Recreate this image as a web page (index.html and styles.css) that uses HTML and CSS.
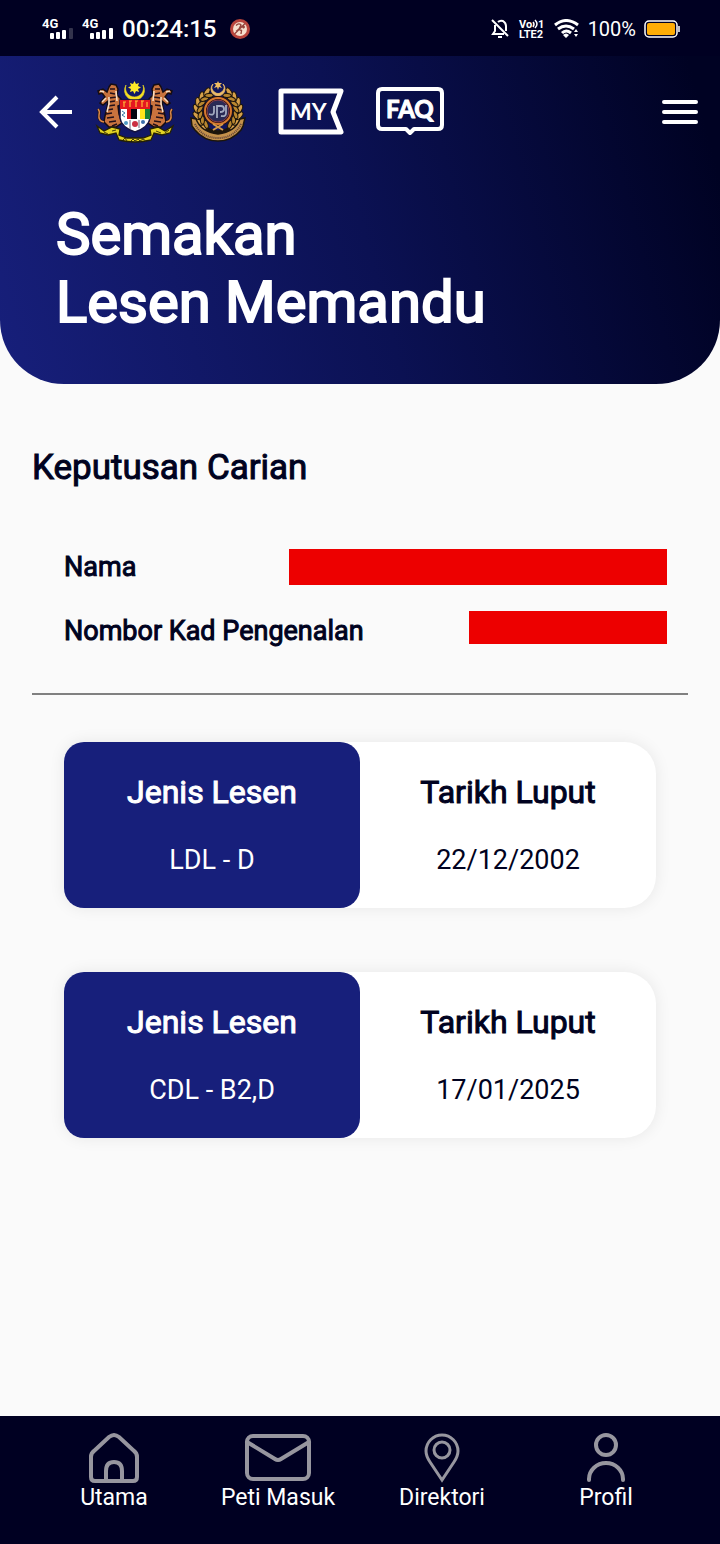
FILE: index.html
```html
<!DOCTYPE html>
<html lang="ms">
<head>
<meta charset="utf-8">
<meta name="viewport" content="width=device-width, initial-scale=1">
<title>Semakan Lesen Memandu</title>
<link rel="stylesheet" href="styles.css">
</head>
<body>
<div class="statusbar">
  <div class="status-left">
    <svg width="32" height="24" viewBox="0 0 32 24" role="img" aria-label="4G">
      <text x="0" y="11" class="net">4G</text>
      <g fill="#fff"><rect x="8" y="16" width="4" height="6" rx="1"/><rect x="14" y="15" width="4" height="7" rx="1"/><rect x="20" y="13" width="4" height="9" rx="1"/></g>
      <rect x="27" y="11" width="4" height="11" rx="1" fill="#33334c"/>
    </svg>
    <svg width="32" height="24" viewBox="0 0 32 24" role="img" aria-label="4G">
      <text x="0" y="11" class="net">4G</text>
      <g fill="#fff"><rect x="8" y="16" width="4" height="6" rx="1"/><rect x="14" y="15" width="4" height="7" rx="1"/><rect x="20" y="13" width="4" height="9" rx="1"/><rect x="27" y="11" width="4" height="11" rx="1"/></g>
    </svg>
    <time class="clock">00:24:15</time>
    <svg class="app-badge" width="22" height="22" viewBox="0 0 22 22" aria-hidden="true">
      <circle cx="11" cy="11" r="10" fill="#b9443c"/><circle cx="11" cy="11" r="7" fill="#f6dfcd"/>
      <path d="M7 7.500Q10 4.500 12 7L10 11L7 13.500M9.500 11L12.500 12.500L12 16M14.500 7V10.500M13 9H16M5.500 16L16 5.500" fill="none" stroke="#96453c" stroke-width="1.400"/>
    </svg>
  </div>
  <div class="status-right">
    <svg width="20" height="22" viewBox="0 0 20 22" fill="none" stroke="#fff" stroke-width="2" aria-hidden="true">
      <path d="M5 7V13L3 16H14M8 4Q10 2 13 3Q16 5 16 8V13M2 2L18 18"/><path d="M8 19H12"/>
    </svg>
    <svg width="28" height="26" viewBox="0 0 28 26" role="img" aria-label="VoLTE">
      <text x="1" y="12" class="volte">Vo</text><text x="20" y="12" class="volte">1</text><text x="1" y="22" class="volte">LTE2</text>
      <path d="M15 6Q17 8 15 11M17 4Q21 8 17 12" fill="none" stroke="#fff" stroke-width="1.500"/>
    </svg>
    <svg width="26" height="20" viewBox="0 0 26 20" aria-hidden="true">
      <g fill="none" stroke="#fff" stroke-width="3"><path d="M1 6Q12 -3 24 6"/><path d="M4 10Q12 4 20 10"/><path d="M8 14Q12 10 17 14"/></g>
      <path d="M9 16Q12 13 15 16L12 19ZM20 13L22 10L24 13ZM20 15H24L22 18Z" fill="#fff"/>
    </svg>
    <span class="battery-text">100%</span>
    <svg width="36" height="18" viewBox="0 0 36 18" aria-hidden="true">
      <rect x="1" y="1" width="32" height="16" rx="4" fill="none" stroke="#fff" stroke-width="1.500"/><rect x="3" y="3" width="28" height="12" rx="2" fill="#ffad05"/><path d="M35 6V12" stroke="#fff" stroke-width="1.500"/>
    </svg>
  </div>
</div>
<header class="hero">
  <nav class="toolbar" aria-label="Alat">
    <button class="icon-btn back" aria-label="Kembali">
      <svg width="34" height="34" viewBox="0 0 34 34" fill="none" stroke="#fff" stroke-width="4"><path d="M33 17H4M18 2L3 17L18 32"/></svg>
    </button>
    <svg class="jata" width="80" height="62" viewBox="0 0 80 62" role="img" aria-label="Jata Negara">
      <path d="M31 4A10 10 0 1 0 48 4A9 9 0 1 1 31 4Z" fill="#f5df20" stroke="#f5df20" stroke-width="0.600"/>
      <path d="M39.500 0L41 3L44 2L43 5L46 6.500L43 8L44 11L41 10L39.500 13L38 10L35 11L36 8L33 6.500L36 5L35 2L38 3Z" fill="#ffe928"/>
      <g id="tiger">
        <path d="M14 6L16 3L21 4L23 8L22 14L26 18L28 23L23 25L24 33L27 42L21 46H14L9 41L10 35L12 27L13 20L8 24L5 22L10 16L7 12L4 13L3 10L8 8L12 11Z" fill="#c9733e" stroke="#160d12" stroke-width="1.500"/>
        <path d="M15 8L20 8M15 12L20 13M14 17L22 16M14 21L20 20M13 25L20 24M12 29L18 28M11 33L17 32M12 37L19 36M14 41L21 40M17 45L22 43" stroke="#241019" stroke-width="1.400"/>
        <path d="M5 10L9 11M7 21L11 17M14 16L14 23L12 31M21 10L22 20" stroke="#f8dcc2" stroke-width="1.600" fill="none"/>
        <path d="M9 41Q3 40 4 34Q5 30 3 28" fill="none" stroke="#20131a" stroke-width="3"/><path d="M9 41Q3 40 4 34Q5 30 3 28" fill="none" stroke="#d98747" stroke-width="1.500"/>
      </g>
      <use href="#tiger" transform="matrix(-1 0 0 1 80 0)"/>
      <path d="M25 19H55V37Q54 46 40 51Q26 46 25 37Z" fill="#fff" stroke="#15133f" stroke-width="1.500"/>
      <path d="M25 19H55V28H25Z" fill="#e51720"/><path d="M29 21V26M35 20V26M41 20V26M47 20V26M52 21V26" stroke="#ffb537" stroke-width="1.200"/><path d="M28 21H31M34 20H37M40 20H43M46 20H49" stroke="#ffb537"/>
      <path d="M32 28H36V38H32Z" fill="#d9141b"/><path d="M36 28H42V38H36Z" fill="#050510"/><path d="M45 28H50V38H45Z" fill="#ffe51c"/><path d="M50 28H55V38H50Z" fill="#187f37"/>
      <path d="M27 30L30 32L27 34L30 36" stroke="#3778a5" fill="none"/><circle cx="31" cy="42" r="2" fill="#4e9ac3"/><circle cx="40" cy="43" r="3" fill="#cb3042"/><circle cx="48" cy="41" r="2" fill="#3d6fac"/><path d="M35 39V48M44 39V47" stroke="#42425b" stroke-width="0.800"/>
      <path d="M2 45L9 50L17 46L25 48L24 54L32 57H48L56 54L55 48L63 46L70 50L78 45L75 52L67 54L59 52L56 59Q40 63 24 59L21 52L13 54L5 52Z" fill="#e3d324" stroke="#242003" stroke-width="1.300"/>
      <path d="M9 51L13 53M17 50L21 49M28 59L30 57L32 60M36 60L38 58L40 60L43 58L45 60L48 58L51 60M61 50L66 52M70 52L74 49" stroke="#443b0c" fill="none"/>
    </svg>
    <svg class="jpj" width="58" height="62" viewBox="0 0 58 62" role="img" aria-label="JPJ">
      <defs>
        <g id="leaf" stroke="#1c150b" stroke-width="1"><ellipse cx="7" cy="30" rx="2.300" ry="4.500" transform="rotate(-28 7 30)" fill="#d6a04a"/><ellipse cx="11" cy="30" rx="2" ry="4.200" transform="rotate(28 11 30)" fill="#b8862f"/></g>
        <g id="branch"><use href="#leaf" transform="rotate(-48 29 30)"/><use href="#leaf" transform="rotate(-30 29 30)"/><use href="#leaf" transform="rotate(-12 29 30)"/><use href="#leaf" transform="rotate(6 29 30)"/><use href="#leaf" transform="rotate(24 29 30)"/><use href="#leaf" transform="rotate(42 29 30)"/><use href="#leaf" transform="rotate(60 29 30)"/></g>
      </defs>
      <path d="M47 44A23 23 0 0 1 11 44" fill="none" stroke="#1c150b" stroke-width="7"/>
      <use href="#branch"/>
      <g transform="matrix(-1 0 0 1 58 0)"><use href="#branch"/></g>
      <path d="M24 3A7 7 0 1 0 34 3A6 6 0 1 1 24 3Z" fill="#edbd68" stroke="#edbd68" stroke-width="0.800"/>
      <path d="M29 0L30 2L33 2L31 4L33 7L30 6L29 9L28 6L25 7L27 4L25 2L28 2Z" fill="#f0bc60"/>
      <circle cx="29" cy="30" r="13" fill="#2a2a55" stroke="#24120b" stroke-width="4"/><circle cx="29" cy="30" r="13" fill="none" stroke="#d77830" stroke-width="2"/><circle cx="29" cy="30" r="11" fill="none" stroke="#8d3c4a"/>
      <path d="M25 25V31Q25 35 20 33M28 37V25H32Q35 25 35 28Q35 31 31 31M37 24V32Q37 36 32 35" fill="none" stroke="#a3aac0" stroke-width="1.800"/>
      <path d="M24 49L34 43M24 43L34 49" stroke="#d69b49" stroke-width="2"/>
      <path d="M2 37L7 38Q12 51 29 53Q46 51 51 38L56 37L54 45L52 49Q43 60 29 60Q15 60 6 49L3 45Z" fill="#c4914b" stroke="#1c150b" stroke-width="1.500"/>
      <path d="M6 43Q13 57 29 57Q45 57 52 43" stroke="#5e4238" stroke-width="2" stroke-dasharray="1 1" fill="none"/>
    </svg>
    <button class="icon-btn my" aria-label="MY">
      <svg width="68" height="48" viewBox="0 0 68 48"><path d="M3 3H63L55 24L63 44H3Z" fill="none" stroke="#fff" stroke-width="5" stroke-linejoin="round"/><text x="12" y="32" class="my-text">MY</text></svg>
    </button>
    <button class="icon-btn faq" aria-label="FAQ">
      <svg width="68" height="50" viewBox="0 0 68 50"><path d="M6 2H62Q66 2 66 6V38Q66 42 62 42H38L34 46L30 42H6Q2 42 2 38V6Q2 2 6 2Z" fill="none" stroke="#fff" stroke-width="4" stroke-linejoin="round"/><text x="10" y="31" class="faq-text">FAQ</text></svg>
    </button>
    <button class="icon-btn menu" aria-label="Menu"><svg width="36" height="24" viewBox="0 0 36 24" stroke="#fff" stroke-width="4" stroke-linecap="round"><path d="M2 2H34M2 12H34M2 22H34"/></svg></button>
  </nav>
  <h1>Semakan<br>Lesen Memandu</h1>
</header>
<main>
  <h2>Keputusan Carian</h2>
  <dl class="details">
    <div class="detail"><dt>Nama</dt><dd class="mask mask-name"></dd></div>
    <div class="detail"><dt>Nombor Kad Pengenalan</dt><dd class="mask mask-id"></dd></div>
  </dl>
  <section class="cards" aria-label="Lesen">
    <article class="card"><div class="half type"><h3>Jenis Lesen</h3><p>LDL - D</p></div><div class="half"><h3>Tarikh Luput</h3><p>22/12/2002</p></div></article>
    <article class="card"><div class="half type"><h3>Jenis Lesen</h3><p>CDL - B2,D</p></div><div class="half"><h3>Tarikh Luput</h3><p>17/01/2025</p></div></article>
  </section>
</main>
<nav class="tabs" aria-label="Utama">
  <a href="#utama"><svg width="52" height="52" viewBox="0 0 52 52"><path d="M6 19L21 5Q26 1 31 5L46 19Q49 21 49 25V45Q49 49 45 49H7Q3 49 3 45V25Q3 21 6 19ZM18 49V39Q18 30 26 30Q34 30 34 39V49"/></svg><span>Utama</span></a>
  <a href="#peti"><svg width="68" height="52" viewBox="0 0 68 52"><rect x="3" y="4" width="62" height="43" rx="6"/><path d="M3 10L31 27Q34 29 37 27L65 10"/></svg><span>Peti Masuk</span></a>
  <a href="#direktori"><svg width="38" height="52" viewBox="0 0 38 52"><g stroke-width="3"><path d="M19 48L7 30Q3 24 3 19A16 16 0 0 1 35 19Q35 24 31 30Z"/><circle cx="19" cy="18" r="8"/></g></svg><span>Direktori</span></a>
  <a href="#profil"><svg width="40" height="52" viewBox="0 0 40 52"><circle cx="20" cy="13" r="10"/><path d="M3 48V47A17 16 0 0 1 37 47V48"/></svg><span>Profil</span></a>
</nav>
</body>
</html>
```

FILE: styles.css
```css
* { box-sizing: border-box; }
body {
  margin: 0;
  min-height: 100vh;
  display: flex;
  flex-direction: column;
  background: #fafafa;
  color: #000220;
  font-family: Roboto, "Liberation Sans", sans-serif;
}
h1, h2, h3, p, dl, dd { margin: 0; }
svg { display: block; flex: none; }
.statusbar {
  height: 56px;
  padding: 2px 40px 0 42px;
  display: flex;
  align-items: center;
  justify-content: space-between;
  background: #000022;
  color: #fff;
}
.status-left, .status-right { display: flex; align-items: center; gap: 8px; }
.clock { font-size: 24px; font-weight: 500; line-height: 28px; }
.app-badge { margin-left: 4px; }
.battery-text { font-size: 20px; line-height: 24px; }
.net { fill: #fff; font-weight: 700; font-size: 13px; }
.volte { fill: #fff; font-weight: 700; font-size: 11px; }
.hero {
  background: linear-gradient(75deg, #171f7b 0%, #0b1153 50%, #000223 96%);
  border-radius: 0 0 64px 64px;
  color: #fff;
}
.toolbar { display: flex; align-items: center; height: 112px; padding: 0 22px 0 39px; }
.icon-btn { padding: 0; border: 0; background: none; color: #fff; cursor: pointer; }
.jata { margin-left: 22px; }
.jpj { margin-left: 14px; }
.my { margin-left: 31px; }
.faq { margin-left: 30px; }
.menu { margin-left: auto; }
.my-text { fill: #fff; font: 700 23px Lato, sans-serif; }
.faq-text { fill: #fff; stroke: #fff; stroke-width: 1px; stroke-linejoin: round; font: 700 24px Lato, sans-serif; }
h1 {
  padding: 32px 56px 48px;
  font-size: 58px;
  line-height: 68px;
  font-weight: 400;
  -webkit-text-stroke: 2px currentColor;
}
main { flex: 1; padding: 66px 32px; }
h2 { font-size: 35px; line-height: 36px; font-weight: 400; -webkit-text-stroke: 1px currentColor; }
.details { padding: 49px 21px 30px 32px; border-bottom: 2px solid #808080; }
.detail { display: flex; justify-content: space-between; align-items: center; height: 64px; }
dt { font-size: 27px; line-height: 32px; -webkit-text-stroke: 1px currentColor; }
.mask { background: #ed0000; height: 36px; }
.mask-name { width: 378px; }
.mask-id { width: 198px; height: 33px; margin-bottom: 8px; }
.cards { display: grid; gap: 64px; padding: 47px 32px; }
.card {
  display: grid;
  grid-template-columns: 1fr 1fr;
  background: #fff;
  border-radius: 20px 32px 32px 20px;
  box-shadow: 0 0 16px rgba(0, 0, 0, 0.08);
}
.half { padding: 32px 0; text-align: center; }
.type { background: #171f7b; color: #fff; border-radius: 20px; }
h3 { font-size: 32px; line-height: 36px; font-weight: 400; -webkit-text-stroke: 1px currentColor; }
.half p { margin-top: 34px; font-size: 27px; line-height: 32px; }
.tabs {
  height: 128px;
  padding: 16px 32px;
  display: grid;
  grid-template-columns: repeat(4, 1fr);
  background: #000022;
}
.tabs a {
  display: flex;
  flex-direction: column;
  align-items: center;
  color: #fff;
  font-size: 23px;
  line-height: 28px;
  text-decoration: none;
}
.tabs svg { fill: none; stroke: #97969f; stroke-width: 4; stroke-linecap: round; }
```
